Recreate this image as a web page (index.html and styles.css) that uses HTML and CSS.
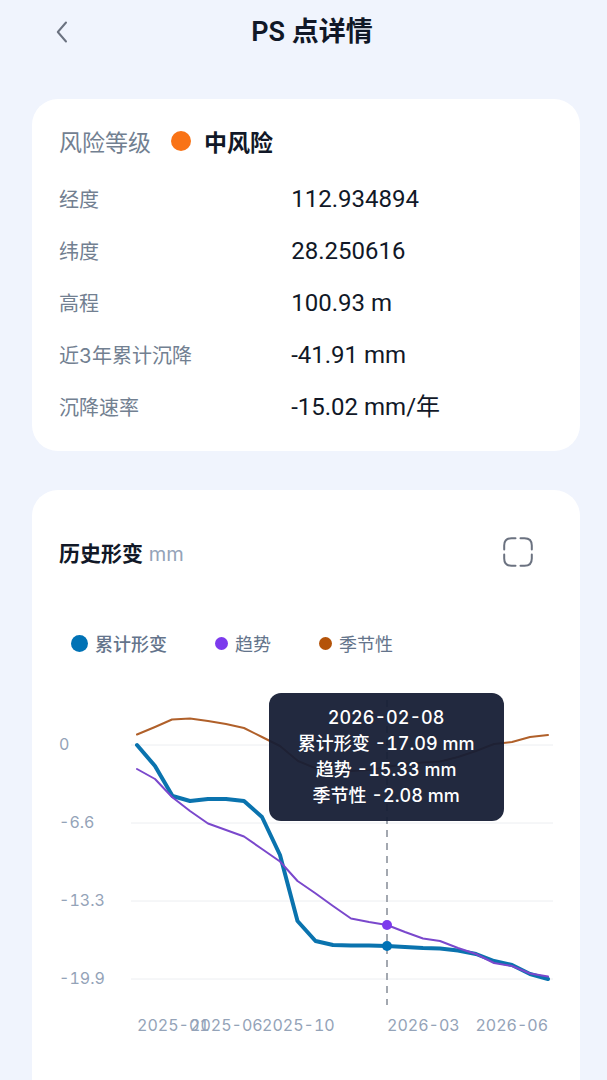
FILE: index.html
```html
<!DOCTYPE html>
<html lang="zh-CN">
<head>
<meta charset="utf-8">
<meta name="viewport" content="width=device-width, initial-scale=1">
<title>PS 点详情</title>
<link rel="stylesheet" href="styles.css">
</head>
<body>
<header class="topbar">
  <button class="icon-button back" type="button" aria-label="返回">
    <svg width="12" height="22" viewBox="0 0 12 22" fill="none" stroke="#6b7280" stroke-width="2" stroke-linecap="round" stroke-linejoin="round"><path d="M10 1.5 1.8 11 10 20.5"/></svg>
  </button>
  <h1 class="page-title">PS 点详情</h1>
</header>
<main class="content">
  <section class="card summary">
    <div class="risk">
      <span class="risk-label">风险等级</span>
      <span class="risk-dot"></span>
      <strong class="risk-value">中风险</strong>
    </div>
    <dl class="facts">
      <div class="fact"><dt>经度</dt><dd>112.934894</dd></div>
      <div class="fact"><dt>纬度</dt><dd>28.250616</dd></div>
      <div class="fact"><dt>高程</dt><dd>100.93 m</dd></div>
      <div class="fact"><dt>近3年累计沉降</dt><dd>-41.91 mm</dd></div>
      <div class="fact"><dt>沉降速率</dt><dd>-15.02 mm/年</dd></div>
    </dl>
  </section>
  <section class="card history">
    <div class="history-head">
      <h2 class="history-title">历史形变 <span class="unit">mm</span></h2>
      <button class="icon-button" type="button" aria-label="全屏">
        <svg width="30" height="30" viewBox="0 0 30 30" fill="none" stroke="#6b7280" stroke-width="2" stroke-linecap="round"><path d="M1.2 12.5V8.5Q1.2 1.2 8.5 1.2H12.5M17.5 1.2H21.5Q28.8 1.2 28.8 8.5V12.5M28.8 17.5V21.5Q28.8 28.8 21.5 28.8H17.5M12.5 28.8H8.5Q1.2 28.8 1.2 21.5V17.5"/></svg>
      </button>
    </div>
    <div class="legend">
      <button class="legend-item active" type="button"><span class="dot total"></span>累计形变</button>
      <button class="legend-item" type="button"><span class="dot trend"></span>趋势</button>
      <button class="legend-item" type="button"><span class="dot season"></span>季节性</button>
    </div>
    <div class="chart">
      <svg class="plot" viewBox="59 690 494 350">
        <g class="grid"><path d="M131 745H553M131 823H553M131 901H553M131 979H553"/></g>
        <path class="cursor" d="M387 700V1005"/>
        <polyline class="line season-line" points="137,734.5 155,727 172,719.5 190,718.5 208,721 226,724 244,728 262,737 280,746 298,761 315,768 333,771 351,771 369,770 387,767 405,764 423,762.5 440,761.5 458,757 476,751 494,744 512,742 530,737 548,735"/>
        <polyline class="line total-line" points="137,745 155,766 172.5,796 190,801 208,799 226,799 244,801 262,817 280,855 297.5,921 315.5,941 333,945 351,945.5 369,945.5 387,946 405,947 423,948 440,948.5 458,950.5 476,954 494,961 512,965 530,974 548,979"/>
        <polyline class="line trend-line" points="137,769 155,779 172,797 190,811 208,823.5 226,830 244,836.5 262,849 280,861.5 297.5,881 315,893 333,906 351,918.5 369,922 387,925 405,932 423,938.5 440,941 458,948 476,954 494,963 512,966 530,973.5 548,976.5"/>
        <circle class="trend-mark" cx="387" cy="925" r="5"/>
        <circle class="total-mark" cx="387" cy="946" r="5"/>
        <g class="axis">
          <text x="59" y="750">0</text>
          <text x="59" y="828">-6.6</text>
          <text x="59" y="906">-13.3</text>
          <text x="59" y="984">-19.9</text>
          <text x="137" y="1031">2025-01</text>
          <text x="190" y="1031">2025-06</text>
          <text x="262" y="1031">2025-10</text>
          <text x="387" y="1031">2026-03</text>
          <text x="548" y="1031" text-anchor="end">2026-06</text>
        </g>
      </svg>
      <div class="tooltip">
        <div>2026-02-08</div>
        <div>累计形变 -17.09 mm</div>
        <div>趋势 -15.33 mm</div>
        <div>季节性 -2.08 mm</div>
      </div>
    </div>
  </section>
</main>
</body>
</html>
```
FILE: styles.css
```css
* {
  box-sizing: border-box;
}

body {
  display: flex;
  flex-direction: column;
  min-height: 100vh;
  margin: 0;
  background: #f0f4fd;
  color: #111827;
  font-family: Inter, "Noto Sans CJK SC", sans-serif;
  font-variant-numeric: tabular-nums;
}

button {
  padding: 0;
  border: 0;
  background: none;
  font: inherit;
  cursor: pointer;
}

.topbar {
  display: grid;
  grid-template-columns: 60px 1fr 48px;
  align-items: center;
  height: 64px;
  padding: 0 27px 0 32px;
}

.icon-button {
  display: flex;
  align-items: center;
  justify-content: center;
}

.back {
  height: 44px;
}

.page-title {
  margin: 0;
  text-align: center;
  font-family: Roboto, "Noto Sans CJK SC", sans-serif;
  font-size: 27px;
  font-weight: 600;
  line-height: 40px;
}

.content {
  display: flex;
  flex: 1;
  flex-direction: column;
  gap: 39px;
  padding: 35px 27px 0 32px;
}

.card {
  padding: 26px 27px 18px;
  border-radius: 26px;
  background: #fff;
}

.risk {
  display: flex;
  align-items: center;
  height: 32px;
  margin-bottom: 16px;
  font-size: 23px;
}

.risk-label {
  color: #728091;
}

.risk-dot {
  width: 20px;
  height: 20px;
  margin: 0 13px 0 20px;
  border-radius: 50%;
  background: #f97316;
}

.risk-value {
  font-weight: 700;
}

.facts {
  margin: 0;
}

.fact {
  display: grid;
  grid-template-columns: 47% 1fr;
  align-items: baseline;
  height: 52px;
  line-height: 52px;
}

.fact dt {
  color: #728091;
  font-size: 20px;
}

.fact dd {
  margin: 0;
  font-family: Roboto, "Noto Sans CJK SC", sans-serif;
  font-size: 24px;
}

.history {
  flex: 1;
  padding-top: 42px;
  border-radius: 26px 26px 0 0;
}

.history-head {
  display: flex;
  align-items: center;
  justify-content: space-between;
  height: 40px;
  padding-right: 20px;
}

.history-title {
  margin: 0;
  font-size: 21px;
  font-weight: 700;
}

.unit {
  color: #94a3b8;
  font-size: 20px;
  font-weight: 400;
}

.legend {
  display: flex;
  gap: 48px;
  margin: 57px 0 33px;
  padding-left: 12px;
}

.legend-item {
  display: flex;
  align-items: center;
  gap: 7px;
  height: 28px;
  color: #64748b;
  font-size: 18px;
}

.active {
  font-weight: 500;
}

.dot {
  width: 13px;
  height: 13px;
  border-radius: 50%;
}

.total {
  width: 17px;
  height: 17px;
  background: #0072b5;
}

.trend {
  background: #7c3aed;
}

.season {
  background: #b45309;
}

.chart {
  position: relative;
}

.plot {
  display: block;
  width: 100%;
}

.grid {
  stroke: #eceef1;
  stroke-width: 1;
}

.cursor {
  stroke: #a3a8b0;
  stroke-width: 2;
  stroke-dasharray: 7 6;
}

.line {
  fill: none;
  stroke-linejoin: round;
  stroke-linecap: round;
}

.season-line {
  stroke: #b0602a;
  stroke-width: 2;
}

.total-line {
  stroke: #0a73ae;
  stroke-width: 4;
}

.trend-line {
  stroke: #7a48cc;
  stroke-width: 2;
}

.trend-mark {
  fill: #7c3aed;
}

.total-mark {
  fill: #0072b5;
}

.axis {
  fill: #94a3b8;
  font-size: 16px;
}

.tooltip {
  position: absolute;
  top: 3px;
  right: 10%;
  width: 235px;
  padding: 12px 0;
  border-radius: 12px;
  background: rgb(22 30 53 / 95%);
  color: #fff;
  font-size: 18px;
  font-weight: 500;
  line-height: 26px;
  text-align: center;
}
```
